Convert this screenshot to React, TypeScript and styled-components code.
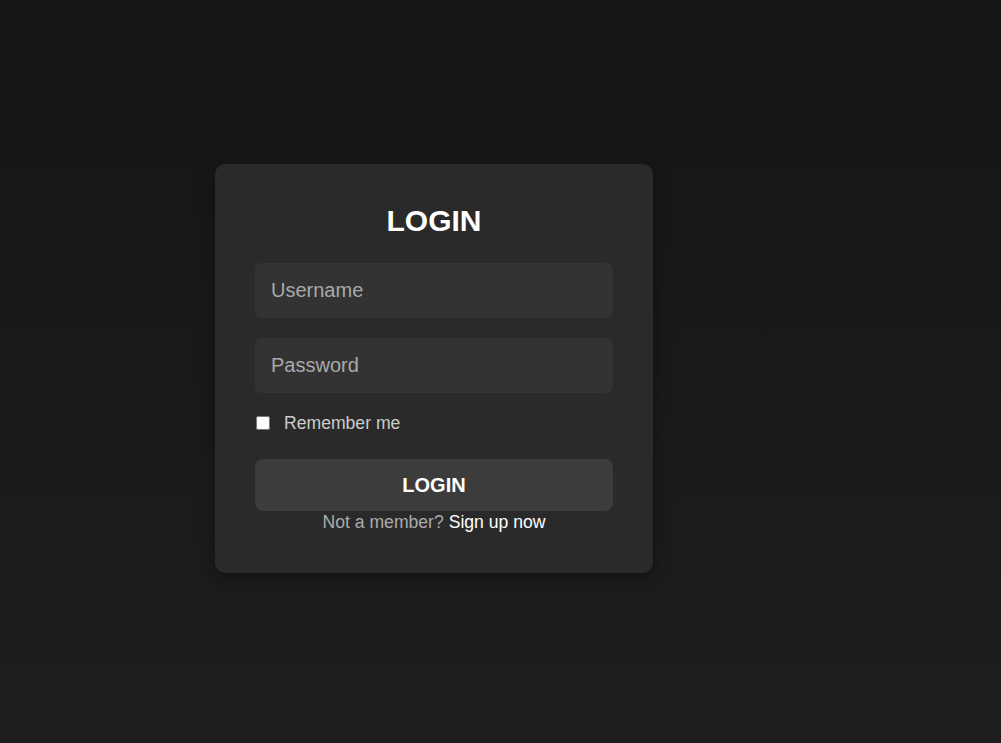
import React from "react";
import styled, { createGlobalStyle } from "styled-components";

const Global = createGlobalStyle`
  html, body { margin: 0; padding: 0; }
  body {
    min-height: 743px;
    background: linear-gradient(to bottom, #151515, #1e1e1e);
    font-family: "Liberation Sans", Arial, sans-serif;
  }
`;

const Page = styled.div`
  min-height: 743px;
  padding: 164px 0 0 215px;
  box-sizing: border-box;
`;

const Card = styled.form`
  width: 438px;
  box-sizing: border-box;
  padding: 40px;
  background: #2a2a2a;
  border-radius: 10px;
  box-shadow: 0 6px 18px rgba(0, 0, 0, 0.35);
  display: flex;
  flex-direction: column;
`;

const Title = styled.h2`
  margin: 0 0 25px;
  height: 34px;
  line-height: 34px;
  text-align: center;
  color: #fff;
  font-size: 30px;
  font-weight: 700;
`;

const Input = styled.input`
  height: 55px;
  box-sizing: border-box;
  margin: 0 0 20px;
  padding: 0 16px;
  background: #333333;
  border: none;
  border-radius: 6px;
  color: #eee;
  font-family: "Liberation Sans", Arial, sans-serif;
  font-size: 20px;
  outline: none;
  &::placeholder { color: #a9a9a9; }
`;

const Remember = styled.label`
  display: flex;
  align-items: center;
  gap: 14px;
  height: 20px;
  margin-bottom: 26px;
  color: #cccccc;
  font-size: 17.6px;
`;

const Check = styled.input`
  width: 14px;
  height: 14px;
  margin: 0 0 0 1px;
`;

const Button = styled.button`
  height: 52px;
  border: none;
  border-radius: 8px;
  background: #3c3c3c;
  color: #fff;
  font-family: "Liberation Sans", Arial, sans-serif;
  font-size: 20px;
  font-weight: 700;
  cursor: pointer;
`;

const Footer = styled.p`
  margin: 0;
  height: 22px;
  line-height: 22px;
  text-align: center;
  color: #aaaaaa;
  font-size: 17.6px;
`;

const SignUp = styled.a`
  color: #fff;
  text-decoration: none;
`;

export default function App() {
  return (
    <>
      <Global />
      <Page>
        <Card onSubmit={(e) => e.preventDefault()}>
          <Title>LOGIN</Title>
          <Input type="text" placeholder="Username" />
          <Input type="password" placeholder="Password" />
          <Remember>
            <Check type="checkbox" />
            Remember me
          </Remember>
          <Button type="submit">LOGIN</Button>
          <Footer>
            Not a member? <SignUp href="#">Sign up now</SignUp>
          </Footer>
        </Card>
      </Page>
    </>
  );
}
